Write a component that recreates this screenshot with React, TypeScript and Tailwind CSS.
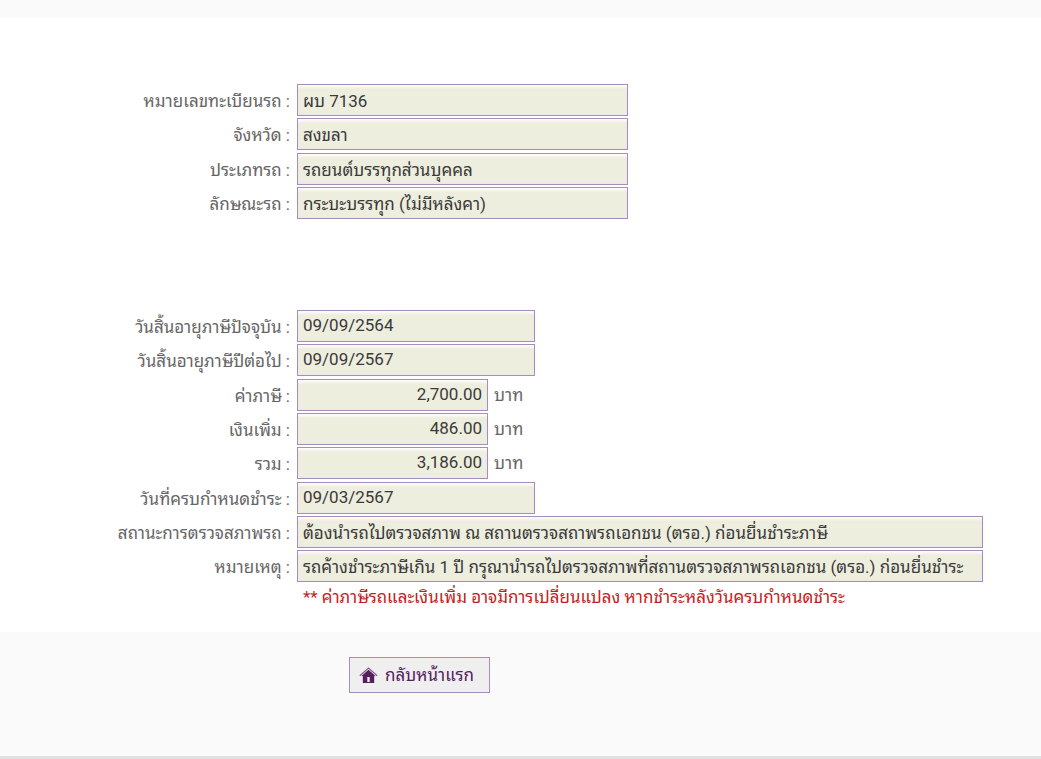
import React from 'react';

type FieldProps = {
    id: string;
    label: string;
    value: string;
    width: string;
    unit?: string;
};

const Field = ({ id, label, value, width, unit }: FieldProps) => (
    <div className="flex items-center">
        <label htmlFor={id} className="w-[290px] shrink-0 pt-0.5 text-right text-[17px] leading-6 text-[#666]">
            {label} :
        </label>
        <input
            id={id}
            type="text"
            readOnly
            defaultValue={value}
            className={`ml-[7px] h-8 min-w-0 border border-[#a68dbd] bg-[#eeeedf] px-[5px] pb-0.5 text-[17px] leading-6 text-[#3a3a3a] shadow-[inset_0_3px_3px_-1px_#fff,inset_0_0_2px_#e6daf0] outline-none ${width} ${unit ? 'text-right' : ''}`}
        />
        {unit && <span className="ml-1.5 text-[17px] leading-6 text-[#666]">{unit}</span>}
    </div>
);

const HomeIcon = () => (
    <svg width="19" height="16" viewBox="0 0 19 16" aria-hidden="true">
        <path d="M.8 8.700 9.500 1l8.700 7.700" fill="none" stroke="#8a6292" strokeWidth="1.300" />
        <path d="M2.500 9 9.500 2.800 16.500 9h-1.300v7H3.800V9z" fill="#56205f" />
        <path d="M8.300 10h2.400v5H8.300z" fill="#efeff0" />
    </svg>
);

const App = () => {
    return (
        <div lang="th" className="border-b-4 border-[#e2e2e2] bg-[#fafafa] pt-[18px] font-[Roboto,'Droid_Sans_Thai','Noto_Sans_Thai_Looped','Noto_Looped_Thai',Loma,Garuda,sans-serif]">
            <form id="tax" className="bg-white pt-[66px] pr-[58px] pb-[23px]">
                {/* Vehicle */}
                <div className="flex flex-col gap-[3px]">
                    <div className="flex flex-col gap-0.5">
                        <Field id="plate" label="หมายเลขทะเบียนรถ" value="ผบ 7136" width="w-[331px]" />
                        <Field id="province" label="จังหวัด" value="สงขลา" width="w-[331px]" />
                    </div>
                    <div className="flex flex-col gap-0.5">
                        <Field id="type" label="ประเภทรถ" value="รถยนต์บรรทุกส่วนบุคคล" width="w-[331px]" />
                        <Field id="body" label="ลักษณะรถ" value="กระบะบรรทุก (ไม่มีหลังคา)" width="w-[331px]" />
                    </div>
                </div>

                <div className="mt-[91px] flex flex-col gap-[3px]">
                    {/* Expiry dates */}
                    <div className="flex flex-col gap-0.5">
                        <Field id="expires" label="วันสิ้นอายุภาษีปัจจุบัน" value="09/09/2564" width="w-[238px]" />
                        <Field id="next" label="วันสิ้นอายุภาษีปีต่อไป" value="09/09/2567" width="w-[238px]" />
                    </div>

                    {/* Amounts */}
                    <div className="flex flex-col gap-0.5">
                        <Field id="fee" label="ค่าภาษี" value="2,700.00" width="w-[191px]" unit="บาท" />
                        <Field id="surcharge" label="เงินเพิ่ม" value="486.00" width="w-[191px]" unit="บาท" />
                        <Field id="total" label="รวม" value="3,186.00" width="w-[191px]" unit="บาท" />
                    </div>

                    {/* Due date and inspection */}
                    <div className="flex flex-col gap-0.5">
                        <Field id="due" label="วันที่ครบกำหนดชำระ" value="09/03/2567" width="w-[238px]" />
                        <Field id="inspection" label="สถานะการตรวจสภาพรถ" value="ต้องนำรถไปตรวจสภาพ ณ สถานตรวจสถาพรถเอกชน (ตรอ.) ก่อนยื่นชำระภาษี" width="flex-1" />
                        <Field id="remark" label="หมายเหตุ" value="รถค้างชำระภาษีเกิน 1 ปี กรุณานำรถไปตรวจสภาพที่สถานตรวจสภาพรถเอกชน (ตรอ.) ก่อนยื่นชำระ" width="flex-1" />
                    </div>
                </div>

                <p className="mt-[3px] ml-[303px] text-[17px] leading-6 text-[#c41e1e]">
                    ** ค่าภาษีรถและเงินเพิ่ม อาจมีการเปลี่ยนแปลง หากชำระหลังวันครบกำหนดชำระ
                </p>
            </form>

            <div className="pt-[25px] pb-[63px] pl-[349px]">
                <button type="button" className="flex h-9 w-[141px] items-center gap-[7px] border border-[#a68dbd] bg-[#efeff0] pl-[9px] text-[17px] leading-6 text-[#56205f]">
                    <HomeIcon />
                    กลับหน้าแรก
                </button>
            </div>
        </div>
    );
};

export default App;
